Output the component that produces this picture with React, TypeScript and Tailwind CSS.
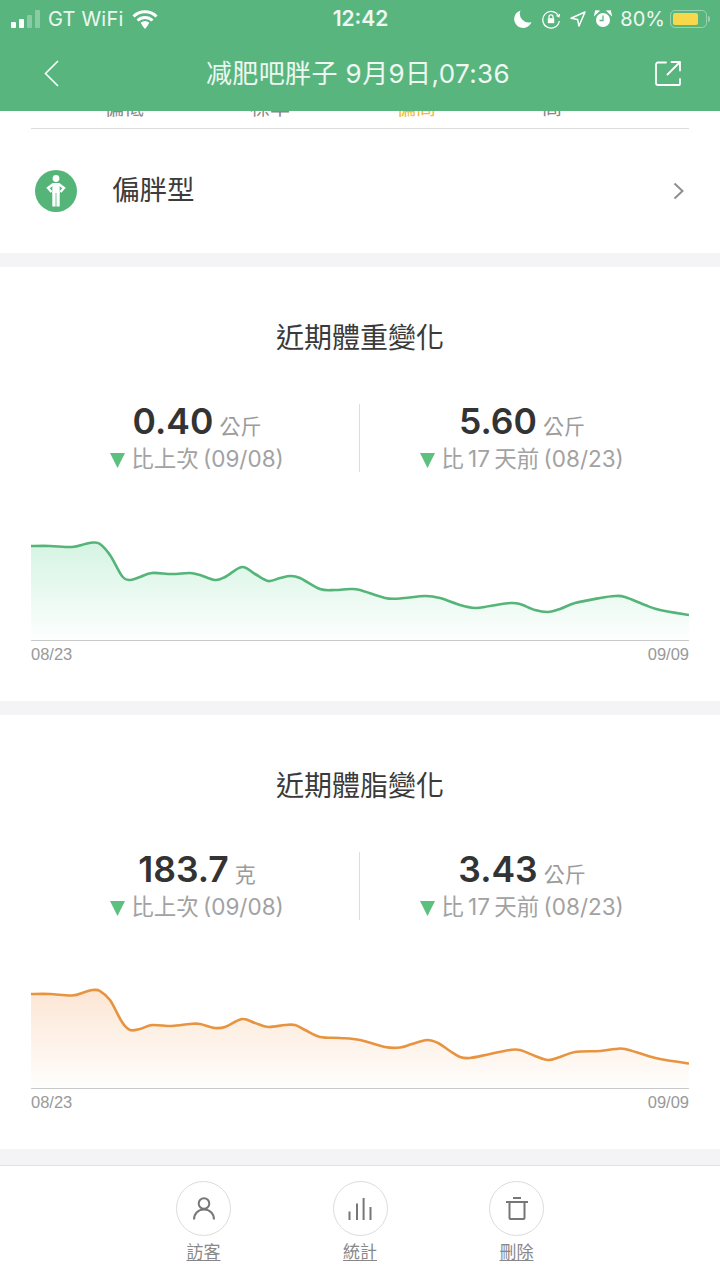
type Point = [number, number];

const FONT = "font-['Inter','Noto_Sans_CJK_TC',sans-serif]";

// weight curve, x/y inside the 658x110 chart box
const weightLine: Point[] = [
  [0, 16], [19, 16], [41, 17], [54, 14], [62, 12.5], [69, 14], [79, 25], [91, 46], [99, 50], [109, 47],
  [121, 43], [141, 44], [159, 43], [169, 45], [184, 50], [194, 47], [211, 37], [224, 44], [237, 51],
  [249, 48], [259, 46], [269, 48], [289, 59], [304, 60], [319, 59], [329, 60], [354, 68], [369, 68.5],
  [394, 66], [409, 68], [429, 75], [444, 78], [459, 76], [479, 73], [489, 74], [504, 80], [517, 82],
  [529, 79], [544, 73], [569, 68], [584, 66], [594, 67], [614, 75], [629, 80], [658, 85],
];

// body fat curve, same box
const fatLine: Point[] = [
  [0, 16], [19, 16], [41, 17.5], [54, 14], [62, 12], [69, 13], [79, 22], [91, 44], [99, 52], [109, 51],
  [121, 47], [141, 48], [159, 46], [169, 46], [184, 50], [194, 49], [211, 41], [224, 45], [237, 49],
  [254, 47], [264, 47], [274, 52], [289, 59], [309, 60], [329, 62], [354, 69], [369, 69.5], [381, 66],
  [396, 62], [407, 65], [419, 73], [429, 79], [439, 80], [459, 76], [479, 72], [489, 72], [504, 78],
  [517, 82], [529, 79], [544, 74], [569, 73], [584, 71], [594, 71], [614, 77], [629, 81], [658, 85.5],
];

// catmull-rom through the samples so the line stays smooth
function smoothPath(pts: Point[]) {
  let d = `M${pts[0][0]} ${pts[0][1]}`;
  for (let i = 0; i < pts.length - 1; i++) {
    const p0 = pts[Math.max(i - 1, 0)];
    const p1 = pts[i];
    const p2 = pts[i + 1];
    const p3 = pts[Math.min(i + 2, pts.length - 1)];
    const c1x = p1[0] + (p2[0] - p0[0]) / 6;
    const c1y = p1[1] + (p2[1] - p0[1]) / 6;
    const c2x = p2[0] - (p3[0] - p1[0]) / 6;
    const c2y = p2[1] - (p3[1] - p1[1]) / 6;
    d += ` C${c1x.toFixed(1)} ${c1y.toFixed(1)} ${c2x.toFixed(1)} ${c2y.toFixed(1)} ${p2[0]} ${p2[1]}`;
  }
  return d;
}

function StatusBar() {
  return (
    <div className="flex h-[37px] items-center justify-between pl-[11px] pr-[10px] text-[20px] text-white/90">
      <div className="flex w-[240px] items-center">
        <div className="flex h-[18px] items-end gap-[3px]">
          <span className="h-[6px] w-[5px] rounded-[1px] bg-white" />
          <span className="h-[9px] w-[5px] rounded-[1px] bg-white" />
          <span className="h-[13px] w-[5px] rounded-[1px] bg-white/30" />
          <span className="h-[18px] w-[5px] rounded-[1px] bg-white/30" />
        </div>
        <span className="ml-[8px] tracking-[0.2px]">GT WiFi</span>
        <svg className="ml-[9px]" width="26" height="20" viewBox="0 0 26 20" fill="none" stroke="white" strokeWidth="3">
          <path d="M1.5 7.5a16.5 16.5 0 0 1 23 0" />
          <path d="M5.5 11.5a11 11 0 0 1 15 0" />
          <path d="M9.5 15a5.5 5.5 0 0 1 7 0" />
          <path d="M13 20l-3.4-4.2a5 5 0 0 1 6.8 0z" fill="white" stroke="none" />
        </svg>
      </div>
      <span className="text-[21px] font-semibold">12:42</span>
      <div className="flex w-[240px] items-center justify-end">
        <svg width="18" height="18" viewBox="0 0 18 18" fill="white">
          <path d="M6.5.5a8.8 8.8 0 0 0 11 11.5A8.9 8.9 0 1 1 6.5.5z" />
        </svg>
        <svg className="ml-[9px]" width="20" height="20" viewBox="0 0 20 20" fill="none" stroke="white" strokeWidth="1.3">
          <path d="M17.5 7A8.3 8.3 0 1 0 18.3 12" />
          <path d="M15.5 6.5l2.4 1.3.6-2.8" />
          <rect x="6.8" y="9.2" width="6.4" height="5" fill="white" stroke="none" />
          <path d="M8 9.2V7.8a2 2 0 0 1 4 0v1.4" />
        </svg>
        <svg className="ml-[9px]" width="16" height="16" viewBox="0 0 16 16" fill="none" stroke="white" strokeWidth="1.5" strokeLinejoin="round">
          <path d="M15 1L1 7.2l6.6 1.2L9 15z" />
        </svg>
        <svg className="ml-[8px]" width="18" height="18" viewBox="0 0 18 18">
          <circle cx="9" cy="10" r="7" fill="white" />
          <path d="M9 5.5V10.500H5.500" fill="none" stroke="#58b57e" strokeWidth="1.3" />
          <path d="M1 4.500L4.500 1.200 1.800 1zM17 4.500L13.500 1.200 16.200 1z" fill="white" stroke="white" strokeWidth="1.5" />
        </svg>
        <span className="ml-[8px]">80%</span>
        <div className="ml-[5px] flex items-center">
          <div className="flex h-[18px] w-[37px] items-center rounded-[5px] border border-white/40 p-[2px]">
            <div className="h-full w-[80%] rounded-[2px] bg-[#f6d84a]" />
          </div>
          <span className="ml-[1px] h-[6px] w-[2px] rounded-r-sm bg-white/40" />
        </div>
      </div>
    </div>
  );
}

function NavBar() {
  return (
    <div className="flex h-[74px] items-center justify-between pb-[2px] pl-[44px] pr-[39px] text-white/90">
      <svg width="15" height="27" viewBox="0 0 15 27" fill="none" stroke="white" strokeWidth="1.6">
        <path d="M14 1L1.500 13.500 14 26" />
      </svg>
      <span className="ml-[2px] text-[26px] tracking-[0.4px]">减肥吧胖子 9月9日,07:36</span>
      <svg width="26" height="25" viewBox="0 0 26 25" fill="none" stroke="white" strokeWidth="1.8" strokeLinecap="round" strokeLinejoin="round">
        <path d="M11 1.500H3a2 2 0 0 0-2 2V22a2 2 0 0 0 2 2h21a1 1 0 0 0 1-1v-5" />
        <path d="M16.500 1H25v8.500M25 1L12.500 13.500" />
      </svg>
    </div>
  );
}

function BodyTypeRow() {
  return (
    <section className="flex h-[142px] flex-col bg-white">
      <div className="mx-[31px] -mt-[14px] flex gap-[106px] border-b border-[#dcdcdc] pb-[9px] pl-[73px] text-[20px] leading-[22px] text-[#888]">
        <span>偏低</span>
        <span>標準</span>
        <span className="text-[#eebc3c]">偏高</span>
        <span>高</span>
      </div>
      <div className="flex flex-1 items-center pl-[35px] pr-[36px]">
        <div className="flex h-[42px] w-[42px] items-center justify-center rounded-full bg-[#55b478]">
          <svg width="20" height="32" viewBox="0 0 20 32" fill="white">
            <circle cx="10" cy="3.500" r="3.400" />
            <rect x="6.300" y="8" width="7.400" height="10" />
            <rect x="6.300" y="17" width="3.300" height="14.500" />
            <rect x="10.400" y="17" width="3.300" height="14.500" />
            <path d="M7 9.200L2 13l3.500 4M13 9.200L18 13l-3.500 4" fill="none" stroke="white" strokeWidth="2.400" />
          </svg>
        </div>
        <span className="ml-[35px] flex-1 text-[27.500px] text-[#3c3c3c]">偏胖型</span>
        <svg width="11" height="18" viewBox="0 0 11 18" fill="none" stroke="#8f8f8f" strokeWidth="2">
          <path d="M1.500 1.500L9.500 9l-8 7.500" />
        </svg>
      </div>
    </section>
  );
}

function Stat({ value, unit, label, className }: { value: string; unit: string; label: string; className: string }) {
  return (
    <div className={`flex flex-col items-center ${className}`}>
      <div className="flex h-[36px] items-baseline leading-[36px]">
        <span className="text-[35.500px] font-semibold text-[#333]">{value}</span>
        <span className="ml-[6px] text-[21px] text-[#9b9b9b]">{unit}</span>
      </div>
      <div className="mt-[5px] flex h-[28px] items-center text-[22.500px] text-[#a2a2a2] [word-spacing:-2px]">
        <svg className="mr-[6px] mt-[2px]" width="15" height="15" viewBox="0 0 15 15">
          <path d="M0 0h15L7.500 15z" fill="#5cc07f" />
        </svg>
        {label}
      </div>
    </div>
  );
}

function TrendCard(props: {
  title: string;
  color: string;
  fill: string;
  gradientId: string;
  points: Point[];
  left: { value: string; unit: string };
  right: { value: string; unit: string };
}) {
  const { title, color, fill, gradientId, points, left, right } = props;
  const line = smoothPath(points);
  return (
    <section className="h-[434px] bg-white px-[31px] pt-[53px]">
      <h2 className="text-center text-[28px] leading-[36px] text-[#3a3a3a]">{title}</h2>
      <div className="mt-[48px] flex h-[68px]">
        <Stat className="w-[328px] pl-[4px]" value={left.value} unit={left.unit} label="比上次 (09/08)" />
        <div className="h-full w-px bg-[#dddddd]" />
        <Stat className="w-[324px]" value={right.value} unit={right.unit} label="比 17 天前 (08/23)" />
      </div>
      <div className="mt-[58px] border-b border-[#c9c9c9]">
        <svg className="block" width="658" height="110" viewBox="0 0 658 110">
          <defs>
            <linearGradient id={gradientId} x1="0" y1="0" x2="0" y2="1">
              <stop offset="0" stopColor={fill} stopOpacity="0.24" />
              <stop offset="1" stopColor={fill} stopOpacity="0.01" />
            </linearGradient>
          </defs>
          <path d={`${line} L658 110 L0 110 Z`} fill={`url(#${gradientId})`} />
          <path d={line} fill="none" stroke={color} strokeWidth="2.600" />
        </svg>
      </div>
      <div className="mt-[2px] flex justify-between font-['Liberation_Sans',sans-serif] text-[16.500px] leading-[22px] text-[#999]">
        <span>08/23</span>
        <span>09/09</span>
      </div>
    </section>
  );
}

function ActionButton({ label, children }: { label: string; children: React.ReactNode }) {
  return (
    <div className="flex w-[55px] flex-col items-center">
      <div className="flex h-[55px] w-[55px] items-center justify-center rounded-full border border-[#dcdcdc]">
        {children}
      </div>
      <span className="mt-[5px] text-[17px] leading-[22px] text-[#888] underline underline-offset-2">{label}</span>
    </div>
  );
}

export default function App() {
  return (
    <div className={`flex h-[1280px] w-[720px] flex-col overflow-hidden bg-[#f4f4f6] ${FONT}`}>
      <header className="relative z-10 h-[111px] bg-[#58b57e]">
        <StatusBar />
        <NavBar />
      </header>

      <main className="flex flex-1 flex-col gap-[14px]">
        <BodyTypeRow />
        <TrendCard
          title="近期體重變化"
          color="#55b478"
          fill="#4fd088"
          gradientId="weightFill"
          points={weightLine}
          left={{ value: "0.40", unit: "公斤" }}
          right={{ value: "5.60", unit: "公斤" }}
        />
        <TrendCard
          title="近期體脂變化"
          color="#e8933f"
          fill="#f0964a"
          gradientId="fatFill"
          points={fatLine}
          left={{ value: "183.7", unit: "克" }}
          right={{ value: "3.43", unit: "公斤" }}
        />
      </main>

      <footer className="flex h-[115px] justify-center gap-[101.500px] border-t border-[#e2e2e2] bg-white pt-[15px]">
        <ActionButton label="訪客">
          <svg width="22" height="23" viewBox="0 0 22 23" fill="none" stroke="#777" strokeWidth="2">
            <circle cx="11" cy="6.500" r="5.300" />
            <path d="M1 22.500c0-6 4.300-10 10-10s10 4 10 10" />
          </svg>
        </ActionButton>
        <ActionButton label="統計">
          <svg width="24" height="22" viewBox="0 0 24 22" fill="none" stroke="#777" strokeWidth="2">
            <path d="M1.500 13.500V22M9 5.500V22M15.600 0V22M22.500 9V22" />
          </svg>
        </ActionButton>
        <ActionButton label="刪除">
          <svg width="22" height="23" viewBox="0 0 22 23" fill="none" stroke="#777" strokeWidth="2">
            <path d="M0 5h22M7 1h8" />
            <path d="M3.500 5v16a1 1 0 0 0 1 1h13a1 1 0 0 0 1-1V5" />
          </svg>
        </ActionButton>
      </footer>
    </div>
  );
}
